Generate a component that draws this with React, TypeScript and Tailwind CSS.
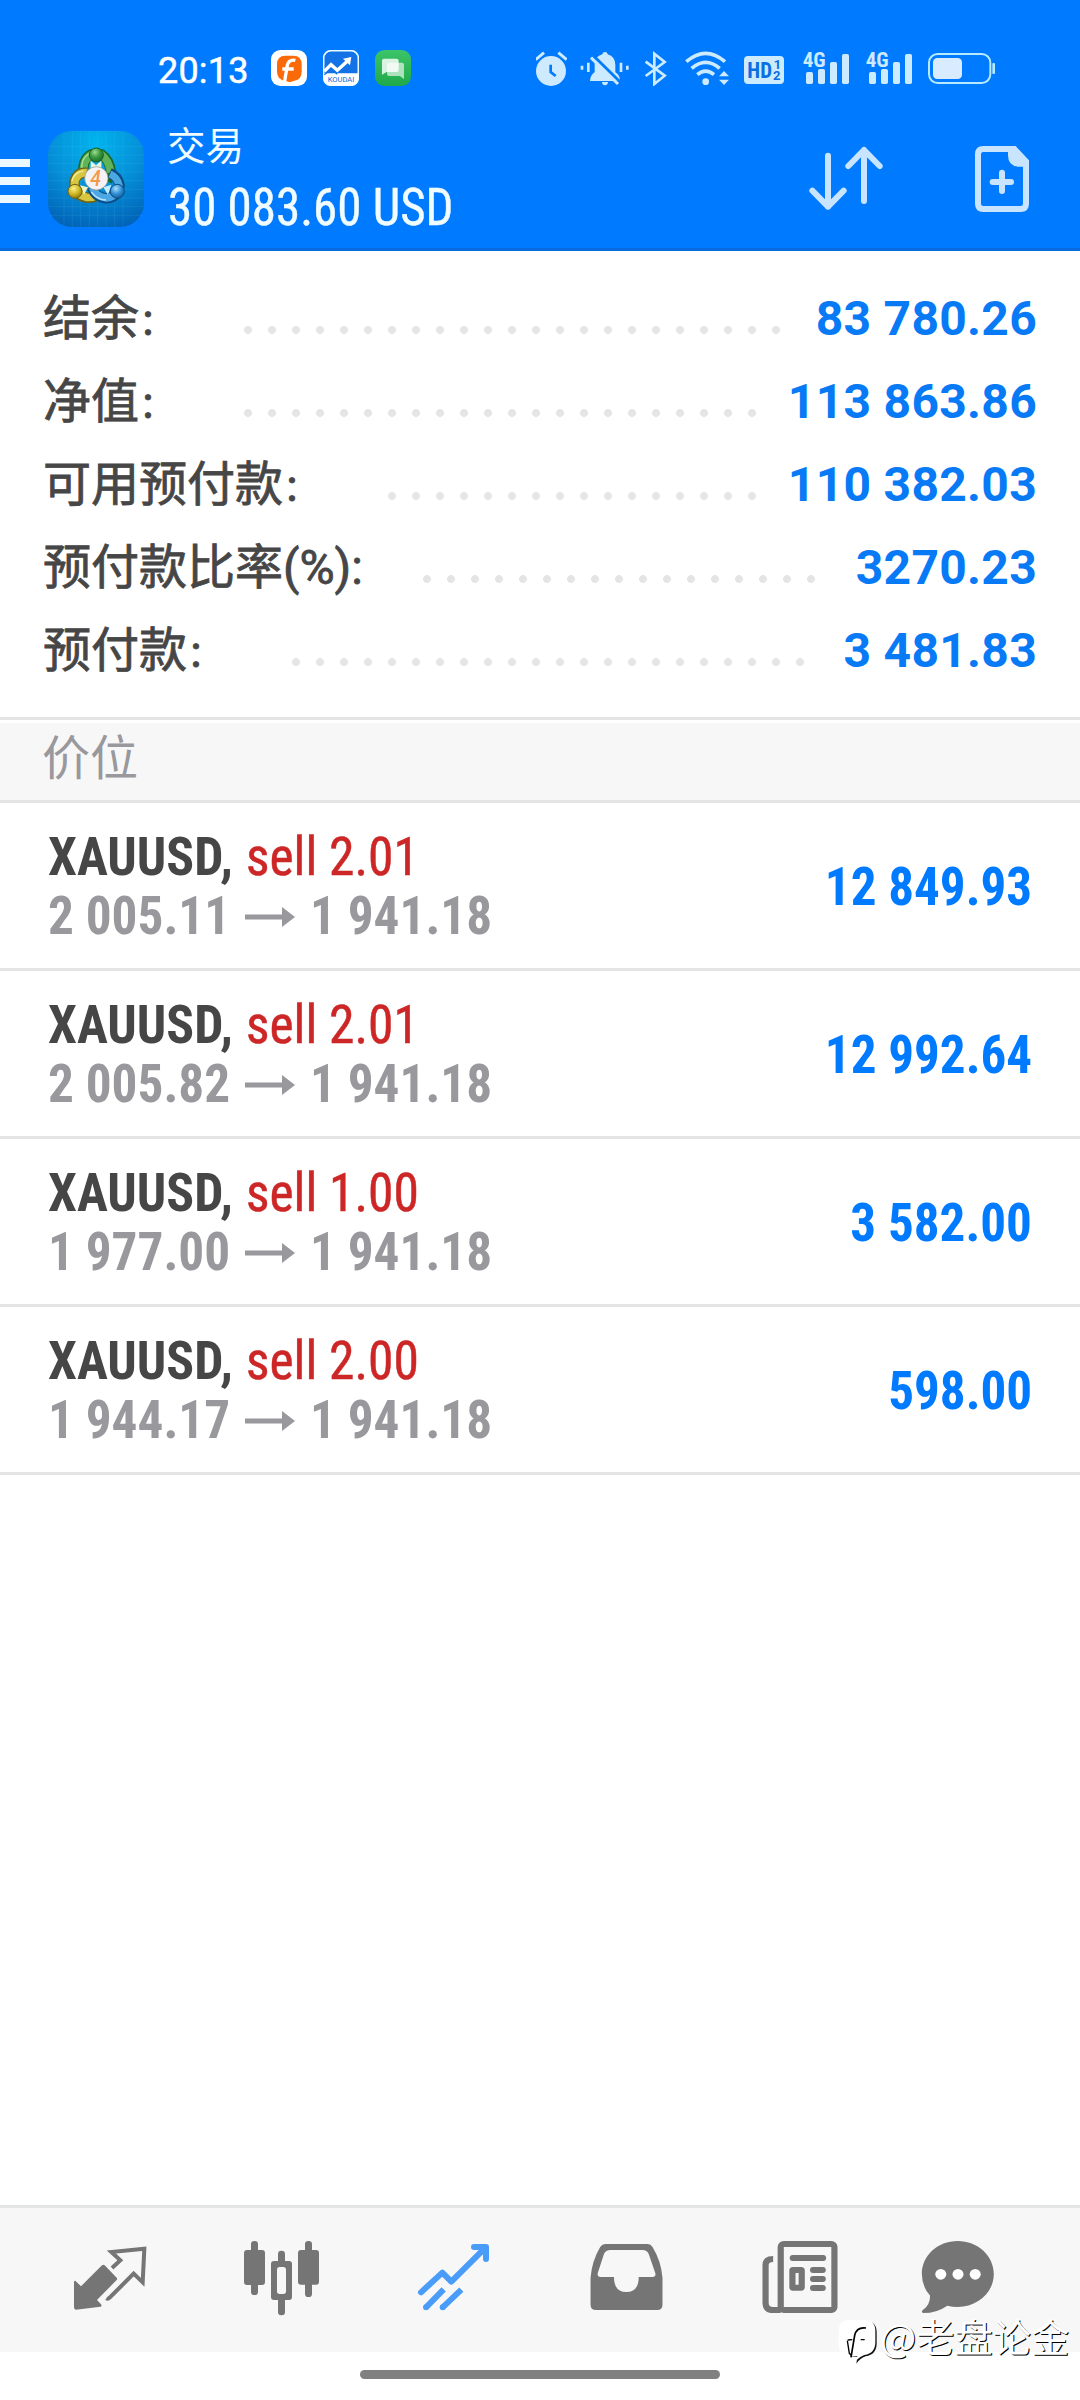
const summary = [
  { label: '结余', suffix: '：', dots: 'w-[552px] ml-[236px]', value: '83 780.26' },
  { label: '净值', suffix: '：', dots: 'w-[528px] ml-[236px]', value: '113 863.86' },
  { label: '可用预付款', suffix: '：', dots: 'w-[384px] ml-[380px]', value: '110 382.03' },
  { label: '预付款比率', suffix: '(%):', dots: 'w-[408px] ml-[415px]', value: '3270.23' },
  { label: '预付款', suffix: '：', dots: 'w-[528px] ml-[284px]', value: '3 481.83' },
];

const positions = [
  { volume: '2.01', open: '2 005.11', current: '1 941.18', profit: '12 849.93' },
  { volume: '2.01', open: '2 005.82', current: '1 941.18', profit: '12 992.64' },
  { volume: '1.00', open: '1 977.00', current: '1 941.18', profit: '3 582.00' },
  { volume: '2.00', open: '1 944.17', current: '1 941.18', profit: '598.00' },
];

function Signal({ className }: { className: string }) {
  return (
    <svg viewBox="96 60 144 108" className={`h-9 w-12 shrink-0 overflow-visible ${className}`} fill="#cdebff">
      <text x="98" y="110" textLength="69" lengthAdjust="spacingAndGlyphs" fontSize="61" fontWeight="700" fontFamily="Roboto Condensed">
        4G
      </text>
      <rect x="108" y="126" width="21" height="36" rx="5" />
      <rect x="144" y="117" width="21" height="45" rx="5" />
      <rect x="180" y="96" width="21" height="66" rx="5" />
      <rect x="216" y="72" width="21" height="90" rx="5" />
    </svg>
  );
}

function StatusBar() {
  return (
    <div className="flex h-[102px] items-start pt-[50px] pl-[158px]">
      <div className="mt-[3px] h-9 w-[113px] text-[36px] leading-[36px] font-normal tracking-[0.2px] text-white [-webkit-text-stroke:0.5px_white]">20:13</div>
      <svg viewBox="393 60 108 108" className="size-9 shrink-0">
        <rect x="393" y="60" width="108" height="108" rx="28" fill="#fff" />
        <path d="M436 77h24q25 0 25 26v22q0 24-22 27l-14 5-12-4q-26-2-26-29v-21q0-26 25-26z" fill="#fb6a08" />
        <path d="M466 91q-19-4-24 14l-8 48M427 117h34" fill="none" stroke="#fff" strokeWidth="10" />
      </svg>
      <svg viewBox="549 60 108 108" className="ml-4 size-9 shrink-0">
        <rect x="551" y="62" width="104" height="104" rx="22" fill="#1272e6" stroke="#e6fbff" strokeWidth="5" />
        <path d="M551 130H655V145q0 21-22 21H573q-22 0-22-21z" fill="#fff" />
        <path d="M553 124l20-20 19 17 34-31" fill="none" stroke="#fff" strokeWidth="10" />
        <path d="M609 86l25-5-4 25z" fill="#fff" />
        <path d="M553 134l21-17 18 16" fill="none" stroke="#1272e6" strokeWidth="4" />
        <text x="563" y="157" textLength="80" lengthAdjust="spacingAndGlyphs" fontSize="23" fontFamily="Roboto" fill="#1668d8">
          KOUDAI
        </text>
      </svg>
      <svg viewBox="705 60 108 108" className="ml-4 size-9 shrink-0">
        <defs>
          <linearGradient id="chat" x2="0" y2="1">
            <stop stopColor="#3cc468" />
            <stop offset="1" stopColor="#20a94b" />
          </linearGradient>
        </defs>
        <rect x="705" y="60" width="108" height="108" rx="28" fill="url(#chat)" />
        <path d="M747 98h39q6 0 6 6v43l-13-9h-32q-6 0-6-6v-28q0-6 6-6z" fill="#fff" opacity=".62" />
        <path d="M731 86h39q6 0 6 6v28q0 6-6 6h-30l-14 8V92q0-6 5-6z" fill="#fff" opacity=".82" />
      </svg>
      <svg viewBox="78 60 93 108" className="ml-[125px] h-9 w-[31px] shrink-0">
        <path d="M77 89l25-21M145 68l25 21" fill="none" stroke="#cdebff" strokeWidth="9" />
        <circle cx="123" cy="123" r="45" fill="#cdeaff" />
        <path d="M122 104v22l15 12" fill="none" stroke="#007aff" strokeWidth="8" />
      </svg>
      <svg viewBox="210 60 150 108" className="ml-[13px] h-9 w-[50px] shrink-0">
        <path d="M216 107v12M235 98v28M333 98v28M352 107v12" fill="none" stroke="#cdebff" strokeWidth="8" />
        <path d="M285 66q7 0 8 7 23 7 23 32v22q14 8 14 26h-90q0-16 14-27v-24q0-22 23-29 1-7 8-7zM276 156h18q-1 10-9 10t-9-10z" fill="#cdebff" />
        <path d="M251 78l81 80" stroke="#007aff" strokeWidth="9" />
        <path d="M243 83l81 79" stroke="#cdebff" strokeWidth="9" />
      </svg>
      <svg viewBox="402 60 69 108" className="ml-[14px] h-9 w-[23px] shrink-0">
        <path d="M407 95l57 42-31 25V71l31 25-57 42" fill="none" stroke="#cdebff" strokeWidth="8" />
      </svg>
      <svg viewBox="522 60 138 108" className="ml-[17px] h-9 w-[46px] shrink-0" fill="none" stroke="#cdebff">
        <path d="M529 95q58-50 116 0" strokeWidth="11" />
        <path d="M545 115q42-36 84 0" strokeWidth="11" />
        <path d="M562 134q25-21 50 0" strokeWidth="11" />
        <circle cx="587" cy="155" r="10" fill="#cdebff" stroke="none" />
        <path d="M627 139l15-16 15 16zM627 149l15 16 15-16z" fill="#cdebff" stroke="none" />
      </svg>
      <svg viewBox="702 60 120 108" className="ml-[14px] h-9 w-10 shrink-0">
        <rect x="702" y="78" width="120" height="84" rx="12" fill="#cdebff" />
        <g fill="#0a6fe0" fontFamily="Roboto Condensed" fontWeight="700">
          <text x="712" y="145" fontSize="67" textLength="74" lengthAdjust="spacingAndGlyphs">HD</text>
          <text x="791" y="116" fontSize="39" fontFamily="Roboto">1</text>
          <text x="789" y="150" fontSize="39" fontFamily="Roboto">2</text>
        </g>
      </svg>
      <Signal className="ml-[18px]" />
      <Signal className="ml-[15px]" />
      <svg viewBox="471 60 207 108" className="ml-[14px] h-9 w-[69px] shrink-0">
        <rect x="477" y="72" width="184" height="87" rx="26" fill="none" stroke="#b5eaff" strokeWidth="6" />
        <rect x="489" y="84" width="87" height="63" rx="13" fill="#d9ecff" />
        <rect x="667" y="99" width="8" height="33" rx="3" fill="#b5eaff" />
      </svg>
    </div>
  );
}

function AppIcon() {
  return (
    <svg viewBox="144 63 288 288" className="mt-[29px] ml-[18px] size-24 shrink-0">
      <defs>
        <radialGradient id="bg" cx=".5" cy=".12" r=".95">
          <stop stopColor="#00b4ee" />
          <stop offset=".5" stopColor="#0590d8" />
          <stop offset="1" stopColor="#0060b4" />
        </radialGradient>
        <radialGradient id="gr" cx=".4" cy=".3" r=".8">
          <stop stopColor="#9fdc8c" />
          <stop offset=".45" stopColor="#3d9b42" />
          <stop offset="1" stopColor="#136426" />
        </radialGradient>
        <radialGradient id="ye" cx=".4" cy=".3" r=".8">
          <stop stopColor="#fbf08a" />
          <stop offset=".5" stopColor="#d0b824" />
          <stop offset="1" stopColor="#7d6a08" />
        </radialGradient>
        <radialGradient id="bl" cx=".4" cy=".3" r=".8">
          <stop stopColor="#a8defc" />
          <stop offset=".5" stopColor="#2f8fd4" />
          <stop offset="1" stopColor="#0b4d8a" />
        </radialGradient>
      </defs>
      <rect x="144" y="63" width="288" height="288" rx="72" fill="url(#bg)" />
      <path
        d="M192 66v282M217 64v286M242 63v288M268 63v288M293 63v288M318 63v288M344 63v288M369 65v284M146 110h284M144 135h288M144 160h288M144 186h288M144 212h288M144 238h288M144 264h288M145 290h286M150 316h276"
        stroke="#7fd4ff"
        strokeWidth="2"
        opacity=".16"
      />
      <path d="M252 196q-8-46 22-63h30q26 18 29 55l-12 26" fill="none" stroke="#1c6a2a" strokeWidth="31" />
      <path d="M252 192q-6-42 22-58h30q24 18 28 54" fill="none" stroke="#5fb358" strokeWidth="23" />
      <path d="M246 180q-4-34 20-48" fill="none" stroke="#b4e0a4" strokeWidth="4" />
      <path d="M260 188q-29-3-37 27-4 38 36 48 20 2 34-6" fill="none" stroke="#6f6410" strokeWidth="31" />
      <path d="M260 188q-28-2-36 27-4 37 35 47 20 2 33-6" fill="none" stroke="#d6c640" strokeWidth="23" />
      <path d="M250 183q-28 4-34 30" fill="none" stroke="#f4ec9a" strokeWidth="4" />
      <path d="M276 232q10 30 43 33 35-2 40-39-4-26-30-37" fill="none" stroke="#0d4c84" strokeWidth="31" />
      <path d="M277 233q11 28 42 31 33-2 38-38-4-24-27-34" fill="none" stroke="#4ba8e2" strokeWidth="22" />
      <path d="M274 246q18 24 44 24" fill="none" stroke="#b5e4ff" strokeWidth="4" />
      <path d="M272 152l16 14 16-14v22h-32z" fill="#e9f6df" />
      <path d="M240 226l24 6-12 22z" fill="#f6f2c0" />
      <path d="M334 224l-24 8 14 22z" fill="#c9ecff" />
      <circle cx="289" cy="135" r="21" fill="url(#gr)" stroke="#17602a" strokeWidth="3" />
      <circle cx="225" cy="244" r="21" fill="url(#ye)" stroke="#6f6410" strokeWidth="3" />
      <circle cx="352" cy="244" r="21" fill="url(#bl)" stroke="#0d4c84" strokeWidth="3" />
      <circle cx="289" cy="205" r="35" fill="#f4f2f4" stroke="#8c8f80" strokeWidth="2" />
      <text x="271" y="228" fontSize="66" fontStyle="italic" fontWeight="500" fontFamily="Roboto" fill="#f39a4a" textLength="32" lengthAdjust="spacingAndGlyphs">
        4
      </text>
    </svg>
  );
}

function Header() {
  return (
    <div className="flex h-[149px] items-start border-b-[3px] border-[#0a6cdc]">
      <div className="mt-[57px] flex w-[30px] flex-col gap-[10px]">
        <div className="h-2 bg-[#ebf8ff]" />
        <div className="h-2 bg-[#ebf8ff]" />
        <div className="h-2 bg-[#ebf8ff]" />
      </div>
      <AppIcon />
      <div className="ml-6 flex flex-col pt-[19px] text-[#f0fcff]">
        <div className="-ml-px text-[38.5px] leading-[52px]">交易</div>
        <div className="mt-[3px] origin-left scale-x-[0.942] font-['Roboto_Condensed',sans-serif] text-[52px] leading-[64px] whitespace-nowrap [-webkit-text-stroke:0.4px_#f0fcff]">
          30 083.60 USD
        </div>
      </div>
      <div className="mt-[38px] mr-[46px] ml-auto flex gap-20">
        <svg viewBox="60 60 270 228" className="h-[76px] w-[90px]" fill="none" stroke="#c8e4ff" strokeWidth="18" strokeLinecap="round" strokeLinejoin="round">
          <path d="M144 107v153M97 212l47 48 47-48" />
          <path d="M252 243V90M205 138l47-48 47 48" />
        </svg>
        <svg viewBox="570 60 192 228" className="h-[76px] w-16" fill="none" stroke="#c8e4ff" strokeWidth="18" strokeLinejoin="round">
          <path d="M610 87h93l35 37v127q0 16-16 16H610q-16 0-16-16V103q0-16 16-16z" strokeLinejoin="miter" />
          <path d="M684 84v22q0 34 34 34h24v-18l-38-38z" fill="#c8e4ff" stroke="none" />
          <path d="M638 186h55M666 158v55" strokeLinecap="round" />
        </svg>
      </div>
    </div>
  );
}

function Summary() {
  return (
    <div className="flex flex-col pt-[26px] pr-[43px] pb-[25px] pl-11">
      {summary.map((row) => (
        <div key={row.label} className="flex h-[83px] text-[48px] leading-[83px] whitespace-nowrap">
          <div className="w-0 text-[#464646] [-webkit-text-stroke:0.8px_#464646]">
            <span className="-ml-px">{row.label}</span>
            <span className={row.suffix === '：' ? 'text-[36px] leading-none' : ''}>{row.suffix}</span>
          </div>
          <div className={`-translate-x-[44px] ${row.dots} mt-[41px] h-6 shrink-0 bg-[radial-gradient(circle,#e5e5e5_3.6px,transparent_4.3px)] bg-[length:24px_24px]`} />
          <div className="ml-auto flex w-0 justify-end font-bold tracking-[0.3px] text-[#087af5]">{row.value}</div>
        </div>
      ))}
    </div>
  );
}

function Positions() {
  return (
    <div className="font-['Roboto_Condensed','Noto_Sans_CJK_SC',sans-serif] text-[54px]">
      {positions.map((p) => (
        <div key={p.open} className="flex h-[168px] items-start border-b-[3px] border-[#e4e4e4] pr-12 pl-12">
          <div className="flex flex-col pt-6 leading-[59px] whitespace-nowrap">
            <div className="flex">
              <span className="w-[198px] origin-left scale-x-[0.957] font-bold text-[#464646]">XAUUSD,</span>
              <span className="origin-left scale-x-[0.953] text-[#cd2626] [-webkit-text-stroke:0.5px_#cd2626]">sell {p.volume}</span>
            </div>
            <div className="flex items-center font-bold text-[#98989d]">
              <span className="w-[197px] origin-left scale-x-[0.949]">{p.open}</span>
              <svg viewBox="0 0 50 20" className="mt-0.5 mr-[15px] h-5 w-[50px]" fill="#98989d">
                <path d="M0 7.500h37V0l13 10-13 10v-7.500H0z" />
              </svg>
              <span className="origin-left scale-x-[0.949]">{p.current}</span>
            </div>
          </div>
          <div className="mt-[54px] ml-auto origin-right scale-x-[0.946] leading-[59px] font-bold whitespace-nowrap text-[#007aff]">{p.profit}</div>
        </div>
      ))}
    </div>
  );
}

function TabBar() {
  return (
    <div className="flex h-[147px] items-start border-t-[3px] border-[#e4e5e5] bg-[#f7f7f7] pt-6 pl-[68px]">
      <svg viewBox="84 126 252 270" className="h-[90px] w-[84px] shrink-0">
        <path d="M186 226q4-3 8 0l36 37q3 4 0 7l-59 60 12 13q4 6-2 7l-73 9q-6 0-6-7v-77q2-6 7 0l14 14z" fill="#757575" />
        <path d="M216 234l25-23-27-25 99-10-5 101-27-26-72 72q-5 5-10 2" fill="none" stroke="#757575" strokeWidth="12" />
      </svg>
      <svg viewBox="600 126 252 270" className="ml-[88px] h-[90px] w-[84px] shrink-0" fill="#757575">
        <rect x="612" y="180" width="63" height="105" rx="9" />
        <rect x="633" y="153" width="21" height="162" rx="10" />
        <rect x="774" y="180" width="63" height="104" rx="9" />
        <rect x="795" y="153" width="21" height="168" rx="10" />
        <rect x="714" y="182" width="21" height="40" rx="10" />
        <rect x="714" y="320" width="21" height="56" rx="10" />
        <rect x="693" y="213" width="63" height="117" rx="9" />
        <rect x="711" y="231" width="27" height="81" rx="8" fill="#f7f7f7" />
      </svg>
      <svg viewBox="1116 126 252 270" className="ml-[88px] h-[90px] w-[84px] shrink-0" fill="none" stroke="#4a9cf9" strokeWidth="18" strokeLinejoin="round">
        <path d="M1143 307l64-59 27 27 100-100" strokeLinecap="round" />
        <path d="M1302 171h36v36" strokeLinecap="round" />
        <path d="M1306 171h32v33z" fill="#4a9cf9" stroke="none" />
        <circle cx="1158" cy="352" r="9" fill="#4a9cf9" stroke="none" />
        <circle cx="1208" cy="352" r="9" fill="#4a9cf9" stroke="none" />
        <path d="M1211 298l-53 54M1264 299l-56 53" />
      </svg>
      <svg viewBox="128 126 244 270" preserveAspectRatio="none" className="ml-[88px] h-[90px] w-[84px] shrink-0" fill="#757575">
        <path
          fillRule="evenodd"
          d="M190 162h123q9 0 14 9 25 42 29 92v81q0 16-16 16H163q-16 0-16-16v-81q4-50 28-92 6-9 15-9zM205 180q-14 0-19 12l-18 57q-2 12 8 12h39q0 45 36 45t36-45h40q11 0 8-12l-19-57q-5-12-18-12z"
        />
      </svg>
      <svg viewBox="633 126 244 270" preserveAspectRatio="none" className="ml-[90px] h-[90px] w-[84px] shrink-0" fill="none" stroke="#757575" strokeWidth="18">
        <rect x="699" y="162" width="156" height="198" rx="9" />
        <path d="M677 207q-22 0-22 18v113q0 22 22 22h22" />
        <path d="M734 204h88M793 240h28M793 267h28M793 294h28" strokeLinecap="round" />
        <rect x="733" y="240" width="27" height="53" rx="2" />
      </svg>
      <svg viewBox="1092 126 244 270" preserveAspectRatio="none" className="ml-[74px] h-[90px] w-[84px] shrink-0" fill="#757575">
        <path d="M1213 153c58 0 105 44 105 99s-47 99-105 99q-16 0-30-4-30 22-70 22-7-3-1-9 21-15 21-43-24-27-24-65c0-55 46-99 104-99z" />
        <circle cx="1164" cy="253" r="16" fill="#fff" />
        <circle cx="1214" cy="253" r="16" fill="#fff" />
        <circle cx="1264" cy="253" r="16" fill="#fff" />
      </svg>
    </div>
  );
}

function Watermark() {
  return (
    <div className="absolute top-[2316px] left-[838px] flex items-start">
      <svg viewBox="24 18 117 150" className="h-[50px] w-[39px]">
        <path d="M63 34h45q32 0 32 34v32q0 34-33 39-18 7-28 22l3-20-24-3V66z" fill="#111" />
        <path d="M56 30h48q32 0 32 34v32q0 34-33 39-14 5-24 16l3-12-26-1q-30-2-30-34V62q0-32 30-32z" fill="#fff" />
        <path d="M108 54q-28-4-34 22l-11 66" fill="none" stroke="#000" strokeWidth="5" />
        <path d="M53 90l14-1M92 89h12M52 92l6 38 6 6" fill="none" stroke="#000" strokeWidth="4" />
      </svg>
      <div className="ml-[3px] -mt-px font-['Noto_Sans_CJK_SC',sans-serif] text-[38.3px] leading-[42px] whitespace-nowrap text-white [text-shadow:1px_1px_0.5px_#000]">@老盘论金</div>
    </div>
  );
}

export default function App() {
  return (
    <div className="relative flex h-[2400px] w-[1080px] flex-col overflow-hidden bg-white font-['Roboto','Noto_Sans_CJK_SC',sans-serif]">
      <div className="bg-[#007aff]">
        <StatusBar />
        <Header />
      </div>
      <Summary />
      <div className="border-t-[3px] border-[#e4e4e4] pt-[3px]">
        <div className="h-20 border-b-[3px] border-[#e4e4e4] bg-[#f7f7f7] pl-[42px] text-[48px] leading-[71px] text-[#98989d]">价位</div>
      </div>
      <Positions />
      <div className="mt-auto">
        <TabBar />
        <div className="flex h-12 justify-center pt-[18px]">
          <div className="h-[9px] w-[360px] rounded-full bg-[#808080]" />
        </div>
      </div>
      <Watermark />
    </div>
  );
}
